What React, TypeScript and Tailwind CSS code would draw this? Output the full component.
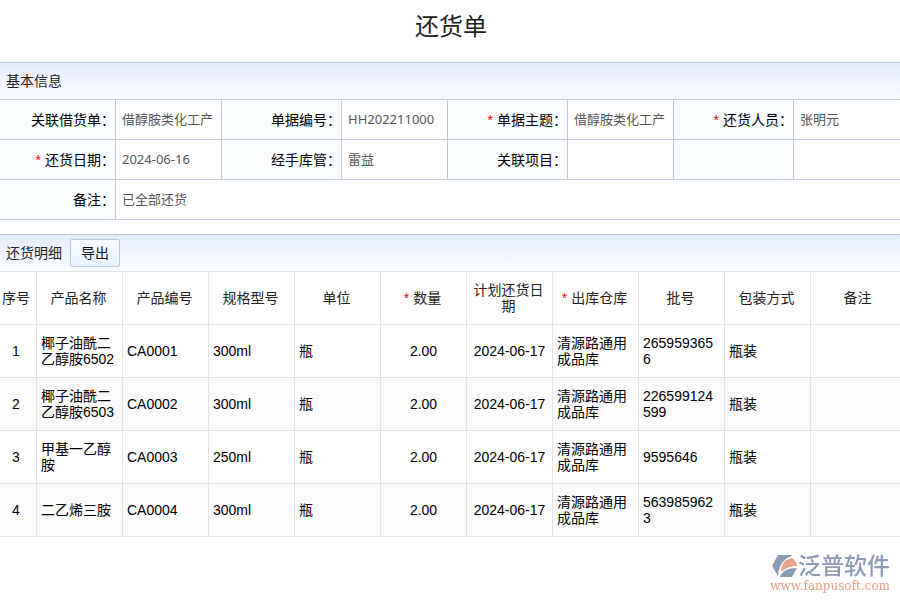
import type { ReactNode } from "react";

const goods = [
  { name: "椰子油酰二乙醇胺6502", code: "CA0001", spec: "300ml", batch: "2659593656" },
  { name: "椰子油酰二乙醇胺6503", code: "CA0002", spec: "300ml", batch: "226599124599" },
  { name: "甲基一乙醇胺", code: "CA0003", spec: "250ml", batch: "9595646" },
  { name: "二乙烯三胺", code: "CA0004", spec: "300ml", batch: "5639859623" },
];

const headers = [
  { title: "序号" },
  { title: "产品名称" },
  { title: "产品编号" },
  { title: "规格型号" },
  { title: "单位" },
  { title: "数量", required: true },
  { title: "计划还货日期" },
  { title: "出库仓库", required: true },
  { title: "批号" },
  { title: "包装方式" },
  { title: "备注" },
];

function Star() {
  return <span className="mr-1 text-[#ff0000]">*</span>;
}

function Label({ children, required }: { children?: ReactNode; required?: boolean }) {
  return (
    <th
      scope="row"
      className="h-10 border-r border-b border-[#c0c8db] bg-[#f8fcff] text-right font-normal whitespace-nowrap text-black"
    >
      {required && <Star />}
      {children}
    </th>
  );
}

function Value({ children, colSpan }: { children?: ReactNode; colSpan?: number }) {
  return (
    <td
      colSpan={colSpan}
      className="h-10 overflow-hidden border-r border-b border-[#c0c8db] pb-px pl-1.5 font-['Noto_Sans','Noto_Sans_CJK_SC',sans-serif] text-[13px] whitespace-nowrap text-[#555] last:border-r-0"
    >
      {children}
    </td>
  );
}

function SectionBar({ title, children }: { title: string; children?: ReactNode }) {
  return (
    <div className="flex h-[37px] items-center gap-2 border-t border-[#c0c8db] bg-linear-to-b from-[#e5ecfa] to-[#f8fbff] pl-1.5">
      <h2 className="text-[#222]">{title}</h2>
      {children}
    </div>
  );
}

function Logo() {
  return (
    <div className="fixed right-2.5 bottom-[7px] flex flex-col items-end">
      <div className="flex items-center gap-px">
        <svg viewBox="0 0 26 24" className="h-6 w-[26px]" aria-hidden="true">
          <path d="M7 1h13l1 1C12 5 8 11 7 22L1 12Z" fill="#8c9ab6" />
          <path d="M10 18C10 10 14 5 21 4c3 2 5 5 5 8-7 0-11 2-16 6Z" fill="#e5a68c" />
          <path d="M9 23c2-6 8-9 17-9l-5 9Z" fill="#8c9ab6" />
        </svg>
        <span className="text-[23px] leading-[26px] font-medium text-[#8c9ab6]">泛普软件</span>
      </div>
      <span className="font-['DejaVu_Serif',serif] text-[12px] leading-3.5 text-[#e2a084]">
        www.fanpusoft.com
      </span>
    </div>
  );
}

export default function App() {
  const cell = "border-r border-b border-[#e3e3e3] px-1";
  return (
    <div className="min-h-screen bg-white font-['Liberation_Sans','Noto_Sans_CJK_SC',sans-serif] text-[14px] leading-4 text-black">
      <h1 className="flex h-[62px] items-center justify-center pb-2 pl-0.5 text-[24px] leading-8 text-[#222]">
        还货单
      </h1>

      <section>
        <SectionBar title="基本信息" />
        <table className="w-full table-fixed border-separate border-spacing-0 border-t border-[#c0c8db]">
          <colgroup>
            <col className="w-[116px]" />
            <col className="w-[106px]" />
            <col className="w-[120px]" />
            <col className="w-[106px]" />
            <col className="w-[120px]" />
            <col className="w-[106px]" />
            <col className="w-[120px]" />
            <col />
          </colgroup>
          <tbody>
            <tr>
              <Label>关联借货单：</Label>
              <Value>借醇胺类化工产</Value>
              <Label>单据编号：</Label>
              <Value>HH202211000</Value>
              <Label required>单据主题：</Label>
              <Value>借醇胺类化工产</Value>
              <Label required>还货人员：</Label>
              <Value>张明元</Value>
            </tr>
            <tr>
              <Label required>还货日期：</Label>
              <Value>2024-06-16</Value>
              <Label>经手库管：</Label>
              <Value>雷益</Value>
              <Label>关联项目：</Label>
              <Value />
              <Label />
              <Value />
            </tr>
            <tr>
              <Label>备注：</Label>
              <Value colSpan={7}>已全部还货</Value>
            </tr>
          </tbody>
        </table>
      </section>

      <section className="mt-3.5">
        <SectionBar title="还货明细">
          <button
            type="button"
            className="h-7 w-[50px] rounded-xs border border-[#bcc8de] bg-linear-to-b from-[#f8fbff] to-[#e8f4ff] text-[#111]"
          >
            导出
          </button>
        </SectionBar>
        <table className="w-full table-fixed border-separate border-spacing-0 border-t border-[#e3e3e3]">
          <colgroup>
            <col className="w-[37px]" />
            {headers.slice(1, -1).map((h) => (
              <col key={h.title} className="w-[86px]" />
            ))}
            <col />
          </colgroup>
          <thead>
            <tr>
              {headers.map((h) => (
                <th
                  key={h.title}
                  scope="col"
                  className="h-[53px] border-r border-b border-[#e3e3e3] pr-1 pl-0.5 font-normal text-[#222] first:pl-0 last:border-r-0 last:pl-2"
                >
                  {h.required && <Star />}
                  {h.title}
                </th>
              ))}
            </tr>
          </thead>
          <tbody>
            {goods.map((row, i) => (
              <tr key={row.code} className="h-[53px] even:bg-[#fbfbfb]">
                <td className="border-r border-b border-[#e3e3e3] pr-1 text-center">{i + 1}</td>
                <td className={cell}>{row.name}</td>
                <td className={cell}>{row.code}</td>
                <td className={cell}>{row.spec}</td>
                <td className={cell}>瓶</td>
                <td className="border-r border-b border-[#e3e3e3] text-center">2.00</td>
                <td className="border-r border-b border-[#e3e3e3] text-center whitespace-nowrap">
                  2024-06-17
                </td>
                <td className={cell}>清源路通用成品库</td>
                <td className={`${cell} break-all`}>{row.batch}</td>
                <td className={cell}>瓶装</td>
                <td className="border-b border-[#e3e3e3]" />
              </tr>
            ))}
          </tbody>
        </table>
      </section>

      <Logo />
    </div>
  );
}
